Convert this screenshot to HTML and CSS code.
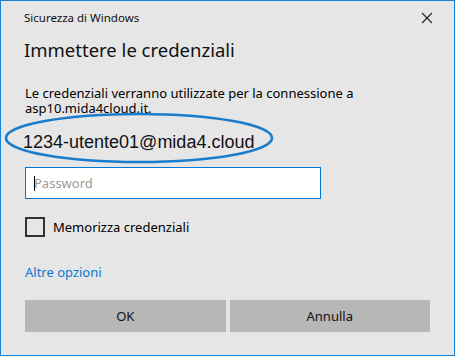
FILE: index.html
```html
<!DOCTYPE html>
<html>

<head>
  <meta charset='utf-8'>
  <title>Sicurezza di Windows</title>
  <link rel="stylesheet" href="styles.css">
</head>

<body>
  <div class='window'>
    <div class='titlebar'>
      <span class='app-name'>Sicurezza di Windows</span>
      <svg class='close' width='12' height='12' viewBox='0 0 12 12'>
        <path d='M1 1 L11 11 M11 1 L1 11' stroke='#222' stroke-width='1.1' fill='none' />
      </svg>
    </div>
    <h1>Immettere le credenziali</h1>
    <p class='message'>Le credenziali verranno utilizzate per la connessione a<br>asp10.mida4cloud.it.</p>
    <div class='user'>
      1234-utente01@mida4.cloud
      <svg class='circle' width='272' height='54' viewBox='0 0 272 54'>
        <ellipse cx='136' cy='27' rx='133' ry='24' stroke='#1a7dcc' stroke-width='2.6' fill='none' />
      </svg>
    </div>
    <div class='field'>
      <span class='caret'></span>
      <input type='password' placeholder='Password'>
    </div>
    <label class='remember'>
      <span class='box'></span>
      Memorizza credenziali
    </label>
    <a class='more' href='#'>Altre opzioni</a>
    <div class='buttons'>
      <button>OK</button>
      <button>Annulla</button>
    </div>
  </div>
</body>

</html>
```

FILE: styles.css
```css
html,
body {
  margin: 0;
  padding: 0;
}

body {
  font-family: 'Noto Sans', sans-serif;
  color: #000;
  background-color: #e6e6e6;
}

.window {
  box-sizing: border-box;
  width: 455px;
  height: 356px;
  border: 1px solid #1883d7;
  background-color: #e6e6e6;
  padding: 0 24px 0 23px;
}

.titlebar {
  display: flex;
  align-items: center;
  justify-content: space-between;
  height: 33px;
}

.app-name {
  font-size: 11.5px;
  color: #111;
}

.close {
  margin-right: -3px;
}

h1 {
  margin: 2px 0 0;
  font-size: 18.5px;
  font-weight: normal;
  line-height: 28px;
  color: #111;
}

.message {
  margin: 22px 0 0 1px;
  font-size: 13px;
  line-height: 15px;
}

.user {
  position: relative;
  margin: 15px 0 0 -1px;
  font-family: 'Liberation Sans', Arial, sans-serif;
  font-size: 18px;
  line-height: 22px;
  color: #111;
}

.circle {
  position: absolute;
  left: -20px;
  top: -20px;
}

.field {
  position: relative;
  margin: 14px 0 0 1px;
  width: 296px;
}

.field input {
  display: block;
  box-sizing: border-box;
  width: 296px;
  height: 32px;
  border: 1px solid #0078d7;
  background: #fff;
  padding: 0 8px;
  font-family: 'Noto Sans', sans-serif;
  font-size: 13px;
  outline: none;
}

.field input::placeholder {
  color: #9a9a9a;
}

.caret {
  position: absolute;
  left: 9px;
  top: 9px;
  width: 1px;
  height: 15px;
  background: #000;
}

.remember {
  display: flex;
  align-items: center;
  gap: 8px;
  height: 20px;
  line-height: 20px;
  margin: 18px 0 0 1px;
  font-size: 13px;
}

.box {
  box-sizing: border-box;
  width: 20px;
  height: 20px;
  border: 2px solid #333;
}

.more {
  display: block;
  margin: 26px 0 0 1px;
  font-size: 13px;
  line-height: 18px;
  color: #0a78d0;
  text-decoration: none;
}

.buttons {
  display: flex;
  gap: 4px;
  margin: 19px 0 0 1px;
}

.buttons button {
  width: 201px;
  height: 32px;
  border: none;
  background-color: #b7b7b7;
  font-family: 'Noto Sans', sans-serif;
  font-size: 13px;
  color: #111;
}
```
